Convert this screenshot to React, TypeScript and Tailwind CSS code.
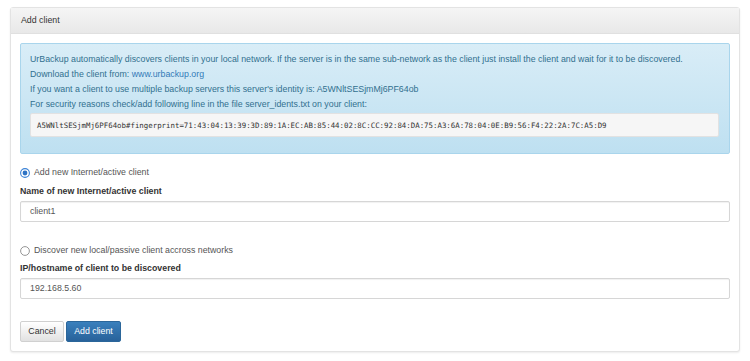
import React from "react";

const sans = "font-['Liberation_Sans',Arial,sans-serif]";

function Radio({ checked }: { checked?: boolean }) {
  return checked ? (
    <svg width="10" height="10" viewBox="0 0 10 10" className="shrink-0">
      <circle cx="5" cy="5" r="4.4" fill="#fff" stroke="#3b82d6" strokeWidth="1.1" />
      <circle cx="5" cy="5" r="2.4" fill="#2f73c4" />
    </svg>
  ) : (
    <svg width="10" height="10" viewBox="0 0 10 10" className="shrink-0">
      <circle cx="5" cy="5" r="4.4" fill="#fff" stroke="#8a8a8a" strokeWidth="0.9" />
    </svg>
  );
}

function Field({ value }: { value: string }) {
  return (
    <div className="flex h-[21px] items-center rounded-[2px] border border-[#d6d6d6] bg-white px-[9px] text-[#555] shadow-[inset_0_1px_1px_rgba(0,0,0,0.06)]">
      {value}
    </div>
  );
}

export default function App() {
  return (
    <div className={`h-[361px] w-[750px] bg-white pl-[10px] pt-[7px] text-[8.8px] ${sans}`}>
      <div className="w-[730px] rounded-[3px] border border-[#e3e3e3] bg-white shadow-[0_1px_2px_rgba(0,0,0,0.08)]">
        <div className="flex h-[26px] items-center border-b border-[#e0e0e0] bg-gradient-to-b from-[#f5f5f5] to-[#e8e8e8] px-[10px] text-[#333]">
          Add client
        </div>
        <div className="px-[9px] pb-[9px] pt-[9px]">
          <div className="rounded-[2px] border border-[#a9d5ec] bg-gradient-to-b from-[#d9edf7] to-[#bee0f1] px-[9px] pb-[16px] pt-[8px] leading-[15px] text-[#31708f]">
            <div>
              UrBackup automatically discovers clients in your local network. If the server is in the same sub-network as the client just install the client and wait for it to be discovered.
            </div>
            <div>
              Download the client from: <span className="text-[#337ab7]">www.urbackup.org</span>
            </div>
            <div>If you want a client to use multiple backup servers this server's identity is: A5WNltSESjmMj6PF64ob</div>
            <div>For security reasons check/add following line in the file server_idents.txt on your client:</div>
            <div className="mt-[1px] mr-[1px] flex h-[24px] items-center rounded-[2px] border border-[#e2e2e2] bg-[#f6f6f6] px-[6px] font-['DejaVu_Sans_Mono',monospace] text-[7.4px] text-[#333]">
              A5WNltSESjmMj6PF64ob#fingerprint=71:43:04:13:39:3D:89:1A:EC:AB:85:44:02:8C:CC:92:84:DA:75:A3:6A:78:04:0E:B9:56:F4:22:2A:7C:A5:D9
            </div>
          </div>

          <div className="mt-[11px] flex h-[15px] items-center gap-[4px] text-[#555]">
            <Radio checked />
            <span>Add new Internet/active client</span>
          </div>
          <div className="mt-[4px] flex h-[15px] items-center font-bold text-[#333]">
            Name of new Internet/active client
          </div>
          <div className="mt-[2px]">
            <Field value="client1" />
          </div>

          <div className="mt-[21px] flex h-[15px] items-center gap-[4px] text-[#555]">
            <Radio />
            <span>Discover new local/passive client accross networks</span>
          </div>
          <div className="mt-[3px] flex h-[15px] items-center font-bold text-[#333]">
            IP/hostname of client to be discovered
          </div>
          <div className="mt-[2px]">
            <Field value="192.168.5.60" />
          </div>

          <div className="mt-[22px] flex gap-[2px]">
            <button className="h-[21px] w-[44px] rounded-[2px] border border-[#d0d0d0] bg-gradient-to-b from-white to-[#e2e2e2] text-[#333]">
              Cancel
            </button>
            <button className="h-[21px] w-[55px] rounded-[2px] border border-[#2b669a] bg-gradient-to-b from-[#3a80bd] to-[#28629a] text-white">
              Add client
            </button>
          </div>
        </div>
      </div>
    </div>
  );
}
